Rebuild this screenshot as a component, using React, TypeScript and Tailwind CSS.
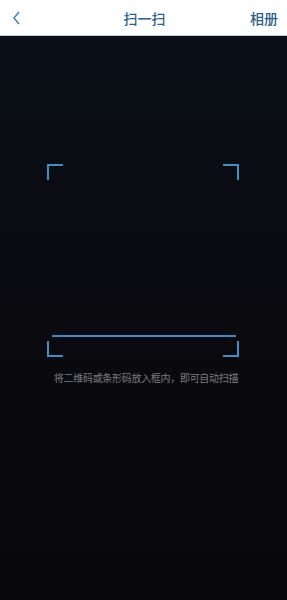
import React from 'react'

const Corner = ({ className }: { className: string }) => (
  <span className={`absolute w-4 h-4 border-[#3d8fc6] ${className}`} />
)

export default function App() {
  return (
    <div
      className="w-[287px] h-[600px] flex flex-col bg-[#0a0b10] overflow-hidden"
      style={{ fontFamily: '"Noto Sans CJK SC", "Noto Sans", sans-serif' }}
    >
      {/* Header */}
      <div className="h-[36px] shrink-0 bg-white border-b border-[#c8c8c8] flex items-center justify-between pl-[11px] pr-[9px]">
        <button className="w-6 h-6 flex items-center justify-start" aria-label="back">
          <svg width="10" height="16" viewBox="0 0 10 16" fill="none">
            <path d="M8 2 L3 8 L8 14" stroke="#3f7fae" strokeWidth="1.4" />
          </svg>
        </button>
        <span className="text-[14px] font-medium text-[#2c5f8a] leading-none">扫一扫</span>
        <span className="w-6 flex justify-end text-[14px] font-medium text-[#2c5f8a] leading-none whitespace-nowrap">相册</span>
      </div>

      {/* Scanner area */}
      <div className="flex-1 flex flex-col items-center bg-gradient-to-b from-[#0a0f17] via-[#0a0a0f] to-[#08080c]">
        <div className="relative w-[192px] h-[193px] mt-[128px] ml-[-1px]">
          <Corner className="top-0 left-0 border-t-2 border-l-2" />
          <Corner className="top-0 right-0 border-t-2 border-r-2" />
          <Corner className="bottom-0 left-0 border-b-2 border-l-2" />
          <Corner className="bottom-0 right-0 border-b-2 border-r-2" />
          <span className="absolute left-[5px] right-[3px] top-[171px] h-[2px] bg-[#3b8ccd]" />
        </div>
        <p className="mt-[16px] ml-[5px] text-[10px] text-[#7d7d80] leading-none tracking-[-0.3px]">
          将二维码或条形码放入框内，即可自动扫描
        </p>
      </div>
    </div>
  )
}
